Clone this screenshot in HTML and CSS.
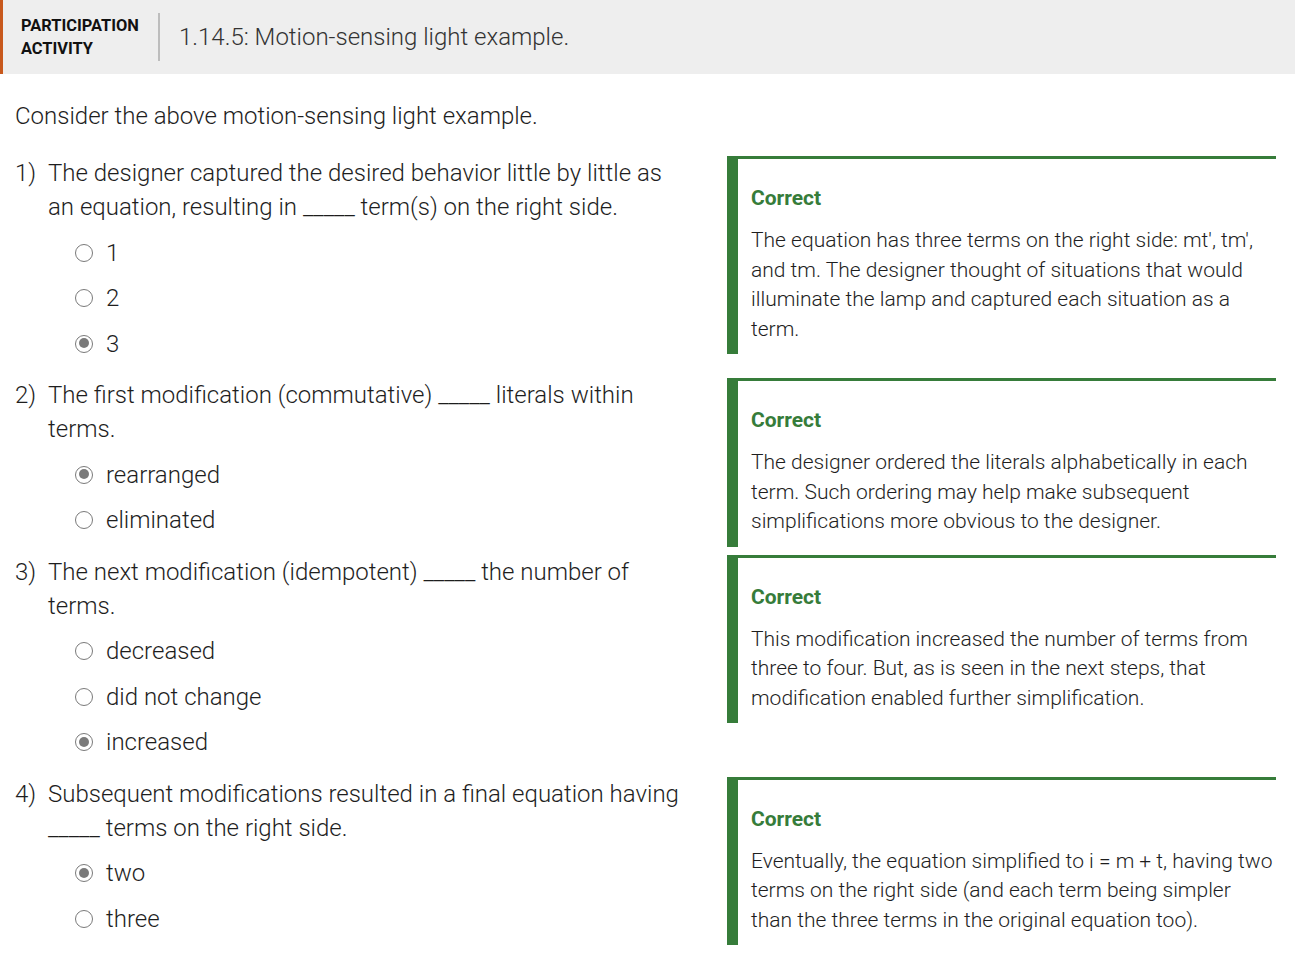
FILE: index.html
```html
<!DOCTYPE html>
<html lang="en">
<head>
<meta charset="utf-8">
<title>Participation activity</title>
<link rel="stylesheet" href="styles.css">
</head>
<body>
<header class="pa-header">
  <div class="pa-label">PARTICIPATION<br>ACTIVITY</div>
  <div class="pa-divider"></div>
  <h1 class="pa-title">1.14.5: Motion-sensing light example.</h1>
</header>
<main class="content">
  <p class="intro">Consider the above motion-sensing light example.</p>

  <div class="qrow">
    <div class="question">
      <div class="qtext"><span class="qnum">1)</span><span class="qbody">The designer captured the desired behavior little by little as an equation, resulting in _____ term(s) on the right side.</span></div>
      <ul class="options">
        <li class="opt"><span class="radio"></span><span class="olabel">1</span></li>
        <li class="opt"><span class="radio"></span><span class="olabel">2</span></li>
        <li class="opt"><span class="radio checked"></span><span class="olabel">3</span></li>
      </ul>
    </div>
    <div class="feedback">
      <div class="fb-title">Correct</div>
      <div class="fb-text">The equation has three terms on the right side: mt', tm', and tm. The designer thought of situations that would illuminate the lamp and captured each situation as a term.</div>
    </div>
  </div>

  <div class="qrow">
    <div class="question">
      <div class="qtext"><span class="qnum">2)</span><span class="qbody">The first modification (commutative) _____ literals within terms.</span></div>
      <ul class="options">
        <li class="opt"><span class="radio checked"></span><span class="olabel">rearranged</span></li>
        <li class="opt"><span class="radio"></span><span class="olabel">eliminated</span></li>
      </ul>
    </div>
    <div class="feedback">
      <div class="fb-title">Correct</div>
      <div class="fb-text">The designer ordered the literals alphabetically in each term. Such ordering may help make subsequent simplifications more obvious to the designer.</div>
    </div>
  </div>

  <div class="qrow">
    <div class="question">
      <div class="qtext"><span class="qnum">3)</span><span class="qbody">The next modification (idempotent) _____ the number of terms.</span></div>
      <ul class="options">
        <li class="opt"><span class="radio"></span><span class="olabel">decreased</span></li>
        <li class="opt"><span class="radio"></span><span class="olabel">did not change</span></li>
        <li class="opt"><span class="radio checked"></span><span class="olabel">increased</span></li>
      </ul>
    </div>
    <div class="feedback">
      <div class="fb-title">Correct</div>
      <div class="fb-text">This modification increased the number of terms from three to four. But, as is seen in the next steps, that modification enabled further simplification.</div>
    </div>
  </div>

  <div class="qrow">
    <div class="question">
      <div class="qtext"><span class="qnum">4)</span><span class="qbody">Subsequent modifications resulted in a final equation having _____ terms on the right side.</span></div>
      <ul class="options">
        <li class="opt"><span class="radio checked"></span><span class="olabel">two</span></li>
        <li class="opt"><span class="radio"></span><span class="olabel">three</span></li>
      </ul>
    </div>
    <div class="feedback">
      <div class="fb-title">Correct</div>
      <div class="fb-text">Eventually, the equation simplified to i = m + t, having two terms on the right side (and each term being simpler than the three terms in the original equation too).</div>
    </div>
  </div>
</main>
</body>
</html>
```

FILE: styles.css
```css
* { box-sizing: border-box; }
html, body { margin: 0; padding: 0; }
body {
  font-family: Roboto, "Liberation Sans", sans-serif;
  color: #1e1e1e;
  background: #fff;
}
.pa-header {
  display: flex;
  align-items: center;
  height: 74px;
  background: #eeeeee;
  border-left: 3px solid #c8581c;
  padding-left: 18px;
}
.pa-label {
  font-size: 16.4px;
  font-weight: 700;
  line-height: 23px;
  color: #111;
  width: 121px;
}
.pa-divider {
  width: 2px;
  height: 48px;
  background: #bdbdbd;
  margin-left: 16px;
  margin-right: 19px;
}
.pa-title {
  margin: 0;
  font-size: 24px;
  font-weight: 300;
  color: #333;
  line-height: 30px;
}
.content {
  padding: 25px 19px 0 15px;
}
.intro {
  margin: 0 0 23px 0;
  font-size: 24px;
  line-height: 34px;
  font-weight: 300;
}
.qrow {
  display: flex;
  gap: 47px;
}
.question {
  width: 665px;
  flex: none;
  padding-bottom: 11.5px;
}
.qtext {
  display: flex;
  font-size: 24px;
  line-height: 34px;
  font-weight: 300;
}
.qnum {
  width: 33px;
  flex: none;
}
.qbody { flex: 1; }
.options {
  list-style: none;
  margin: 0;
  padding: 6px 0 0 60px;
}
.opt {
  display: flex;
  align-items: center;
  height: 45.5px;
  font-size: 24px;
  font-weight: 300;
}
.radio {
  width: 18px;
  height: 18px;
  border-radius: 50%;
  border: 1.5px solid #7a7a7a;
  margin-right: 13px;
  flex: none;
  position: relative;
  background: #fff;
}
.radio.checked::after {
  content: "";
  position: absolute;
  left: 2.5px;
  top: 2.5px;
  width: 10px;
  height: 10px;
  border-radius: 50%;
  background: #7a7a7a;
}
.feedback {
  width: 549px;
  flex: none;
  align-self: flex-start;
  border-left: 11px solid #367c3a;
  border-top: 3px solid #367c3a;
  padding: 27px 0 10px 13px;
}
.fb-title {
  color: #367c3a;
  font-weight: 700;
  font-size: 21px;
  line-height: 24px;
  margin-bottom: 16px;
}
.fb-text {
  font-size: 21px;
  line-height: 29.5px;
  font-weight: 300;
}
```
